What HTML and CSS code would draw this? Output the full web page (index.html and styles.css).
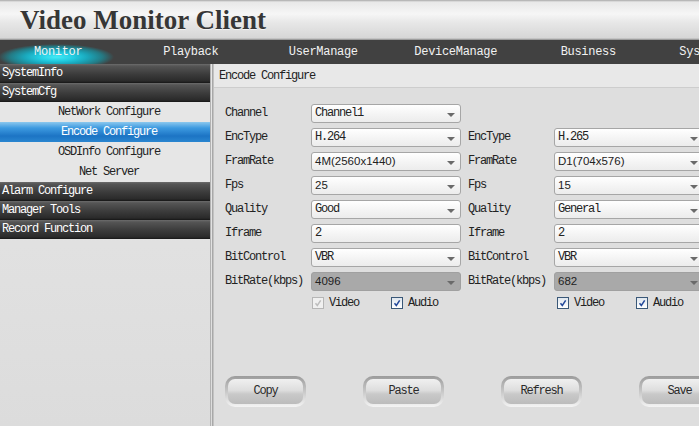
FILE: index.html
```html
<!DOCTYPE html>
<html lang="en">
<head>
    <meta charset="UTF-8">
    <title>Video Monitor Client</title>
    <link rel="stylesheet" href="styles.css">
</head>
<body>
    <header class="top-bar">
        <h1 class="app-title">Video Monitor Client</h1>
    </header>

    <nav class="main-menu">
        <span class="menu-item active">Monitor</span>
        <span class="menu-item">Playback</span>
        <span class="menu-item">UserManage</span>
        <span class="menu-item">DeviceManage</span>
        <span class="menu-item">Business</span>
        <span class="menu-item">SystemManage</span>
    </nav>

    <div class="workspace">
        <aside class="sidebar">
            <div class="side-group">SystemInfo</div>
            <div class="side-group">SystemCfg</div>
            <div class="side-item">NetWork Configure</div>
            <div class="side-item selected">Encode Configure</div>
            <div class="side-item">OSDInfo Configure</div>
            <div class="side-item">Net Server</div>
            <div class="side-group">Alarm Configure</div>
            <div class="side-group">Manager Tools</div>
            <div class="side-group">Record Function</div>
        </aside>

        <section class="panel">
            <div class="panel-title">Encode Configure</div>

            <div class="form">
                <div class="row">
                    <div class="field">
                        <label>Channel</label>
                        <div class="select">Channel1</div>
                    </div>
                </div>
                <div class="row">
                    <div class="field">
                        <label>EncType</label>
                        <div class="select">H.264</div>
                    </div>
                    <div class="field">
                        <label>EncType</label>
                        <div class="select">H.265</div>
                    </div>
                </div>
                <div class="row">
                    <div class="field">
                        <label>FramRate</label>
                        <div class="select num">4M(2560x1440)</div>
                    </div>
                    <div class="field">
                        <label>FramRate</label>
                        <div class="select num">D1(704x576)</div>
                    </div>
                </div>
                <div class="row">
                    <div class="field">
                        <label>Fps</label>
                        <div class="select num">25</div>
                    </div>
                    <div class="field">
                        <label>Fps</label>
                        <div class="select num">15</div>
                    </div>
                </div>
                <div class="row">
                    <div class="field">
                        <label>Quality</label>
                        <div class="select">Good</div>
                    </div>
                    <div class="field">
                        <label>Quality</label>
                        <div class="select">General</div>
                    </div>
                </div>
                <div class="row">
                    <div class="field">
                        <label>Iframe</label>
                        <div class="text-input">2</div>
                    </div>
                    <div class="field">
                        <label>Iframe</label>
                        <div class="text-input">2</div>
                    </div>
                </div>
                <div class="row">
                    <div class="field">
                        <label>BitControl</label>
                        <div class="select">VBR</div>
                    </div>
                    <div class="field">
                        <label>BitControl</label>
                        <div class="select">VBR</div>
                    </div>
                </div>
                <div class="row">
                    <div class="field">
                        <label>BitRate(kbps)</label>
                        <div class="select num dim">4096</div>
                    </div>
                    <div class="field">
                        <label>BitRate(kbps)</label>
                        <div class="select num dim">682</div>
                    </div>
                </div>
                <div class="row checks">
                    <div class="field">
                        <span class="check disabled"><svg viewBox="0 0 12 12"><path d="M3 6.2 L5.2 9 L9.2 2.8"/></svg>Video</span>
                        <span class="check"><svg viewBox="0 0 12 12"><path d="M3 6.2 L5.2 9 L9.2 2.8"/></svg>Audio</span>
                    </div>
                    <div class="field">
                        <span class="check"><svg viewBox="0 0 12 12"><path d="M3 6.2 L5.2 9 L9.2 2.8"/></svg>Video</span>
                        <span class="check"><svg viewBox="0 0 12 12"><path d="M3 6.2 L5.2 9 L9.2 2.8"/></svg>Audio</span>
                    </div>
                </div>
            </div>

            <div class="actions">
                <button class="btn"><span>Copy</span></button>
                <button class="btn"><span>Paste</span></button>
                <button class="btn"><span>Refresh</span></button>
                <button class="btn"><span>Save</span></button>
            </div>
        </section>
    </div>
</body>
</html>
```

FILE: styles.css
```css
* {
    margin: 0;
    padding: 0;
    box-sizing: border-box;
}

body {
    width: 699px;
    height: 426px;
    overflow: hidden;
    background: #dedede;
    font-family: 'Liberation Mono', 'DejaVu Sans Mono', monospace;
    font-size: 12px;
    letter-spacing: -1.2px;
    color: #222;
}

/* title strip */
.top-bar {
    height: 40px;
    background: linear-gradient(#a8a8a8 0, #e8e8e8 2px, #f6f6f6 14px, #e8e8e8 22px, #d6d6d6 38px, #8a8a8a 40px);
    display: flex;
    align-items: center;
    padding-left: 20px;
}

.app-title {
    font-family: 'Liberation Serif', 'DejaVu Serif', serif;
    font-size: 27px;
    font-weight: bold;
    letter-spacing: 0;
    color: #363636;
    text-shadow: 0 1px 0 rgba(255, 255, 255, 0.6);
}

/* top menu */
.main-menu {
    height: 24px;
    background: #414141;
    display: flex;
    overflow: hidden;
    white-space: nowrap;
}

.menu-item {
    flex: 0 0 132.5px;
    text-align: center;
    line-height: 24px;
    color: #f2f2f2;
    letter-spacing: -0.3px;
}

.menu-item:first-child {
    margin-left: -8px;
}

.menu-item.active {
    background: radial-gradient(ellipse 58px 13px at 64px 17px, #44eaf6 0%, #22cde2 30%, #1aa6ba 55%, #247a84 80%, rgba(65, 65, 65, 0) 100%);
}

/* body: side menu + panel */
.workspace {
    display: flex;
    height: 362px;
}

.sidebar {
    width: 213px;
    flex: 0 0 213px;
    border-right: 1px solid #a8a8a8;
    background: linear-gradient(#e6e6e6, #dcdcdc);
    position: relative;
}

.sidebar::after {
    content: '';
    position: absolute;
    top: 0;
    bottom: 0;
    left: 210px;
    width: 1px;
    background: #b2b2b2;
}

.side-group {
    width: 210px;
    height: 19px;
    line-height: 18px;
    padding-left: 2px;
    color: #fff;
    background: linear-gradient(#6c6c6c 0, #555 2px, #3c3c3c 10px, #2a2a2a 17px, #161616 19px);
}

.side-item {
    width: 210px;
    height: 20px;
    line-height: 20px;
    text-align: center;
    padding-left: 8px;
    background: #e6e6e6;
}

.side-item.selected {
    color: #fff;
    background: linear-gradient(#8cc8ee 0, #3d9ae0 30%, #1c74c4 70%, #2a86d0 100%);
}

.panel {
    flex: 1;
    border-left: 1px solid #c2c2c2;
    min-width: 0;
}

.panel-title {
    height: 24px;
    line-height: 24px;
    padding-left: 5px;
    background: #e8e8e8;
    border-bottom: 1px solid #cdcdcd;
}

/* encoder form, two columns of fields */
.form {
    padding: 13px 0 0 11px;
}

.row {
    display: flex;
    height: 24px;
    align-items: center;
    white-space: nowrap;
}

.field {
    flex: 0 0 243px;
    display: flex;
    align-items: center;
}

.field label {
    width: 86px;
    flex: 0 0 86px;
}

.select,
.text-input {
    position: relative;
    width: 150px;
    flex: 0 0 150px;
    height: 19px;
    line-height: 17px;
    padding-left: 3px;
    border: 1px solid #a6a6a6;
    border-radius: 3px;
    background: linear-gradient(#ffffff, #f3f3f3 60%, #ececec);
}

.select::after {
    content: '';
    position: absolute;
    right: 5px;
    top: 8px;
    border-left: 4px solid transparent;
    border-right: 4px solid transparent;
    border-top: 4px solid #6a6a6a;
}

.select.num {
    font-family: 'Liberation Sans', Arial, sans-serif;
    font-size: 11.5px;
    letter-spacing: 0;
}

.select.dim {
    background: #a9a9a9;
    border-color: #a0a0a0;
}

.checks {
    height: 20px;
}

.checks .field {
    padding-left: 87px;
}

.check {
    display: inline-flex;
    align-items: center;
    width: 79px;
}

.check svg {
    width: 12px;
    height: 12px;
    margin-right: 5px;
    border: 1px solid #3a5878;
    background: linear-gradient(#dfe6ee, #ffffff);
    fill: none;
    stroke: #22489a;
    stroke-width: 1.8;
}

.check.disabled svg {
    border-color: #b6b6b6;
    background: #f0f0f0;
    stroke: #bdbdbd;
}

/* bottom buttons */
.actions {
    display: flex;
    gap: 57px;
    padding: 63px 0 0 11px;
}

.btn {
    flex: 0 0 81px;
    height: 31px;
    padding: 3px;
    border: none;
    border-radius: 10px;
    background: linear-gradient(#9c9c9c, #c8c8c8 50%, #f4f4f4);
    font-family: inherit;
    font-size: 12px;
    letter-spacing: -1.2px;
    color: #2a2a2a;
}

.btn span {
    display: block;
    height: 100%;
    line-height: 25px;
    border-radius: 7px;
    background: linear-gradient(#f0f0f0 0, #dedede 45%, #c9c9c9 60%, #bcbcbc 100%);
}
```
